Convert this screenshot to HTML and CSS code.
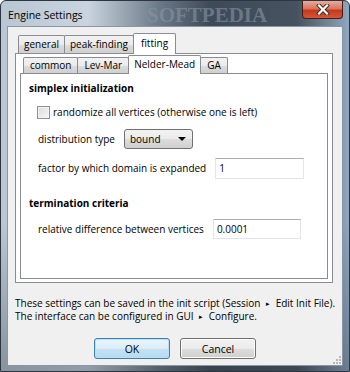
FILE: index.html
```html
<!DOCTYPE html>
<html lang="en">
<head>
    <meta charset="UTF-8">
    <title>Engine Settings</title>
    <link rel="stylesheet" href="styles.css">
</head>
<body>

<div class="window">
    <div class="titlebar">
        <span class="title">Engine Settings</span>
        <span class="watermark">SOFTPEDIA</span>
        <div class="close">
            <svg width="14" height="11" viewBox="0 0 14 11">
                <path d="M3 1.5 L11 9.5 M11 1.5 L3 9.5" stroke="#3a2a26" stroke-width="4" stroke-linecap="square"/>
                <path d="M3 1.5 L11 9.5 M11 1.5 L3 9.5" stroke="#fff" stroke-width="2.2" stroke-linecap="square"/>
            </svg>
        </div>
    </div>

    <div class="client">
        <!-- outer tabs -->
        <div class="tabwidget outer">
            <div class="tabbar">
                <div class="tab">general</div>
                <div class="tab">peak-finding</div>
                <div class="tab active">fitting</div>
            </div>
            <div class="pane">
                <!-- inner tabs -->
                <div class="tabwidget inner">
                    <div class="tabbar">
                        <div class="tab">common</div>
                        <div class="tab">Lev-Mar</div>
                        <div class="tab active">Nelder-Mead</div>
                        <div class="tab">GA</div>
                    </div>
                    <div class="pane form">
                        <div class="group-title">simplex initialization</div>
                        <div class="row check">
                            <span class="checkbox"></span>
                            <span>randomize all vertices (otherwise one is left)</span>
                        </div>
                        <div class="row">
                            <span>distribution type</span>
                            <div class="combo">bound<span class="arrow"></span></div>
                        </div>
                        <div class="row">
                            <span>factor by which domain is expanded</span>
                            <div class="edit wide">1</div>
                        </div>
                        <div class="group-title second">termination criteria</div>
                        <div class="row">
                            <span>relative difference between vertices</span>
                            <div class="edit">0.0001</div>
                        </div>
                    </div>
                </div>
            </div>
        </div>

        <p class="note">These settings can be saved in the init script (Session <span class="sep">▸</span> Edit Init File).<br>The interface can be configured in GUI <span class="sep">▸</span> Configure.</p>

        <div class="buttons">
            <button class="btn default">OK</button>
            <button class="btn">Cancel</button>
        </div>

        <svg class="grip" width="9" height="9" viewBox="0 0 9 9">
            <rect x="7" y="1" width="2" height="2" fill="#b8b8b8"/>
            <rect x="4" y="4" width="2" height="2" fill="#b8b8b8"/>
            <rect x="7" y="4" width="2" height="2" fill="#b8b8b8"/>
            <rect x="1" y="7" width="2" height="2" fill="#b8b8b8"/>
            <rect x="4" y="7" width="2" height="2" fill="#b8b8b8"/>
            <rect x="7" y="7" width="2" height="2" fill="#b8b8b8"/>
        </svg>
    </div>
</div>

</body>
</html>
```

FILE: styles.css
```css
* {
    box-sizing: border-box;
}

body {
    margin: 0;
    font-family: "Open Sans", "Noto Sans", sans-serif;
    font-size: 10px;
    color: #000;
}

.window {
    position: relative;
    width: 350px;
    height: 372px;
    display: flex;
    flex-direction: column;
    padding: 0 6px 5px 6px;
    border: 1px solid #2c3642;
    border-radius: 6px 6px 0 0;
    background:
        linear-gradient(to bottom, rgba(0, 0, 0, 0) 60%, rgba(40, 50, 60, 0.35) 100%),
        linear-gradient(to right, #b9c6d3 0%, #c9d4de 25%, #6d7b89 45%, #3f4b58 60%, #46525f 85%, #8fa7c0 100%);
    overflow: hidden;
}

.titlebar {
    position: relative;
    height: 27px;
    display: flex;
    justify-content: space-between;
    align-items: flex-start;
}

.title {
    margin: 7px 0 0 1px;
    font-size: 10.5px;
    color: #000;
    z-index: 1;
}

.watermark {
    position: absolute;
    left: 140px;
    top: 2px;
    font-family: "Liberation Serif", serif;
    font-weight: bold;
    font-size: 21px;
    color: #8595a4;
    opacity: 0.6;
}

.close {
    position: relative;
    width: 41px;
    height: 18px;
    display: flex;
    align-items: center;
    justify-content: center;
    border: 1px solid #4a1d14;
    border-top: none;
    border-radius: 0 0 4px 4px;
    background: linear-gradient(#e9ab9a, #d8765f 45%, #c6391d 55%, #d4563a);
}

.client {
    position: relative;
    flex: 1;
    display: flex;
    flex-direction: column;
    padding: 6px 9px 6px 7px;
    background-color: #f0f0f0;
    border: 1px solid #8a96a3;
}

/* tab widgets */
.tabwidget {
    display: flex;
    flex-direction: column;
}

.tabwidget.outer {
    height: 250px;
}

.tabwidget.inner {
    flex: 1;
}

.tabbar {
    display: flex;
    align-items: flex-end;
    padding-left: 3px;
    position: relative;
    z-index: 1;
}

.outer > .tabbar {
    height: 20px;
}

.inner > .tabbar {
    height: 18px;
    padding-left: 3px;
}

.tab {
    height: 18px;
    padding: 0 5px;
    line-height: 17px;
    border: 1px solid #898c95;
    border-bottom: none;
    border-radius: 2px 2px 0 0;
    background: linear-gradient(#f2f2f2, #ebebeb 50%, #dddddd 51%, #cfcfcf);
    margin-right: -1px;
}

.inner .tab {
    height: 16px;
    padding: 0 6px;
    line-height: 15px;
}

.tab.active {
    height: 21px;
    margin-bottom: -1px;
    padding: 0 7px;
    line-height: 19px;
    background: #fff;
    position: relative;
    z-index: 2;
}

.inner .tab.active {
    height: 19px;
    padding: 0 5px;
    line-height: 17px;
}

.pane {
    flex: 1;
    display: flex;
    flex-direction: column;
    background-color: #fff;
    border: 1px solid #898c95;
}

.outer > .pane {
    padding: 1px 4px 3px 4px;
}

/* form inside the Nelder-Mead page */
.form {
    padding: 7px 8px 0 8px;
}

.group-title {
    font-weight: bold;
    line-height: 15px;
}

.group-title.second {
    margin-top: 18px;
}

.row {
    display: flex;
    align-items: center;
    gap: 9px;
    padding-left: 9px;
    height: 20px;
    margin-top: 8px;
}

.row + .row {
    margin-top: 9px;
}

.row.check {
    gap: 3px;
    padding-left: 8px;
    height: 16px;
}

.checkbox {
    width: 13px;
    height: 13px;
    border: 1px solid #8e8f8f;
    background: linear-gradient(135deg, #dcdcdc, #f6f6f6);
    box-shadow: inset 0 0 0 1px #f4f4f4;
}

.combo {
    width: 69px;
    height: 20px;
    display: flex;
    align-items: center;
    justify-content: space-between;
    padding: 0 5px;
    border: 1px solid #707070;
    border-radius: 3px;
    background: linear-gradient(#f2f2f2, #ebebeb 50%, #dddddd 51%, #cfcfcf);
}

.arrow {
    width: 0;
    height: 0;
    border-left: 4px solid transparent;
    border-right: 4px solid transparent;
    border-top: 4px solid #000;
    margin-right: 1px;
}

.edit {
    width: 88px;
    height: 20px;
    padding: 0 3px;
    line-height: 18px;
    background-color: #fff;
    border: 1px solid #e2e3ea;
    border-top-color: #abadb3;
}

.edit.wide {
    width: 89px;
    height: 21px;
    line-height: 19px;
}

/* bottom part */
.note {
    margin: 14px -4px 0 0;
    line-height: 12px;
    white-space: nowrap;
}

.sep {
    font-size: 7px;
    padding: 0 3px;
    vertical-align: 1px;
}

.buttons {
    display: flex;
    justify-content: center;
    gap: 10px;
    margin-top: 15px;
    padding-left: 2px;
}

.btn {
    width: 76px;
    height: 21px;
    font-family: inherit;
    font-size: 10.5px;
    border: 1px solid #707070;
    border-radius: 3px;
    background: linear-gradient(#f2f2f2, #ebebeb 50%, #dddddd 51%, #cfcfcf);
    box-shadow: inset 0 0 0 1px #fcfcfc;
}

.btn.default {
    border-color: #3c7fb1;
    background: linear-gradient(#eaf5fc, #dcedf8 50%, #c6e3f5 51%, #b5d9ef);
    box-shadow: inset 0 0 0 1px #b8e0f8;
}

.grip {
    position: absolute;
    right: 1px;
    bottom: 1px;
}
```
